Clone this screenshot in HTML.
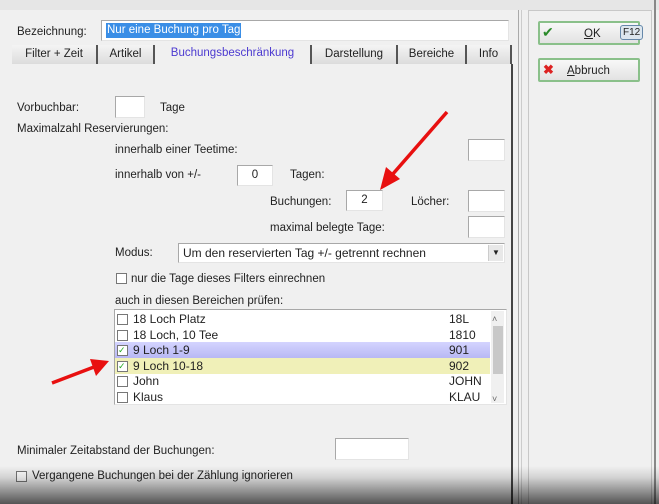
<!DOCTYPE html>
<html><head><meta charset="utf-8"><style>
body{margin:0;width:659px;height:504px;overflow:hidden;background:#f0f0f0;font-family:"Liberation Sans",sans-serif;font-size:11.5px;line-height:16px;color:#222;position:relative}
.a{position:absolute;white-space:nowrap}
.box{position:absolute;background:#fff;border:1px solid #a8a8a8;border-right-color:#e4e4e4;border-bottom-color:#e4e4e4;box-sizing:border-box}
.tab{position:absolute;top:45px;height:19px;background:linear-gradient(#f4f4f4,#dcdcdc);border-right:2px solid #555;box-sizing:border-box;text-align:center;line-height:19px}
.cb{position:absolute;width:9px;height:9px;border:1px solid #777;background:#fff}
.row{position:absolute;left:115px;width:375px;height:16px;line-height:16px;font-size:12px}
.btn{position:absolute;left:538px;width:102px;height:24px;border:2px solid #8ac08a;border-radius:2px;background:linear-gradient(#f8f8f8,#e2e2e2);box-sizing:border-box}
</style></head><body>
<div class="a" style="left:0;top:0;width:659px;height:10px;background:#e6e6e6"></div>
<div class="a" style="left:518px;top:10px;width:1px;height:494px;background:#aaa"></div>
<div class="a" style="left:521px;top:10px;width:1px;height:494px;background:#ccc"></div>
<div class="a" style="left:528px;top:10px;width:124px;height:494px;border:1px solid #c8c8c8;border-bottom:none;box-sizing:border-box"></div>
<div class="a" style="left:654px;top:0;width:2px;height:504px;background:#888"></div>

<div class="a" style="left:17px;top:24px">Bezeichnung:</div>
<div class="box" style="left:101px;top:20px;width:408px;height:21px"></div>
<div class="a" style="left:106px;top:23px;background:#3a8ee6;color:#fff;padding:0 1px;line-height:15px">Nur eine Buchung pro Tag</div>

<div class="tab" style="left:12px;width:86px">Filter + Zeit</div>
<div class="tab" style="left:98px;width:57px">Artikel</div>
<div class="a" style="left:155px;top:44px;width:155px;height:21px;background:#f0f0f0;text-align:center;color:#4c3ad0;line-height:19px">Buchungsbeschränkung</div>
<div class="tab" style="left:310px;width:88px;border-left:2px solid #555">Darstellung</div>
<div class="tab" style="left:398px;width:69px">Bereiche</div>
<div class="tab" style="left:467px;width:45px">Info</div>
<div class="a" style="left:511px;top:64px;width:2px;height:440px;background:#444"></div>

<div class="btn" style="top:21px"><span class="a" style="left:2px;top:1px;color:#2a8a2a;font-size:14px">✔</span><span class="a" style="left:44px;top:3px"><u>O</u>K</span><span class="a" style="left:80px;top:2px;font-size:10px;line-height:13px;border:1px solid #6688aa;border-radius:3px;padding:0 2px;background:#dde6ee">F12</span></div>
<div class="btn" style="top:58px"><span class="a" style="left:3px;top:2px;color:#d22;font-weight:bold;font-size:13px">✖</span><span class="a" style="left:27px;top:3px"><u>A</u>bbruch</span></div>

<div class="a" style="left:17px;top:100px">Vorbuchbar:</div>
<div class="box" style="left:115px;top:96px;width:30px;height:22px"></div>
<div class="a" style="left:160px;top:100px">Tage</div>
<div class="a" style="left:17px;top:121px">Maximalzahl Reservierungen:</div>
<div class="a" style="left:115px;top:142px">innerhalb einer Teetime:</div>
<div class="box" style="left:468px;top:139px;width:37px;height:22px"></div>
<div class="a" style="left:115px;top:167px">innerhalb von +/-</div>
<div class="box" style="left:237px;top:165px;width:36px;height:21px;text-align:center;line-height:19px">0</div>
<div class="a" style="left:290px;top:167px">Tagen:</div>
<div class="a" style="left:270px;top:194px">Buchungen:</div>
<div class="box" style="left:346px;top:190px;width:37px;height:21px;text-align:center;line-height:19px">2</div>
<div class="a" style="left:411px;top:194px">Löcher:</div>
<div class="box" style="left:468px;top:190px;width:37px;height:22px"></div>
<div class="a" style="left:270px;top:220px">maximal belegte Tage:</div>
<div class="box" style="left:468px;top:216px;width:37px;height:22px"></div>
<div class="a" style="left:115px;top:245px">Modus:</div>
<div class="box" style="left:178px;top:243px;width:327px;height:20px;padding-left:4px;line-height:18px;font-size:12px">Um den reservierten Tag +/- getrennt rechnen<span class="a" style="right:1px;top:1px;width:14px;height:16px;background:#e8e8e8;border-left:1px solid #ccc;font-size:8px;text-align:center;line-height:16px">▼</span></div>
<div class="cb" style="left:116px;top:273px"></div>
<div class="a" style="left:131px;top:271px">nur die Tage dieses Filters einrechnen</div>
<div class="a" style="left:115px;top:293px">auch in diesen Bereichen prüfen:</div>

<div class="box" style="left:114px;top:309px;width:393px;height:96px"></div>
<div class="a" style="left:491px;top:311px;width:13px;height:92px;background:#f0f0f0"></div>
<div class="a" style="left:493px;top:326px;width:10px;height:48px;background:#c8c8c8"></div>
<div class="a" style="left:492px;top:311px;font-size:9px;color:#666">˄</div>
<div class="a" style="left:492px;top:391px;font-size:9px;color:#666">˅</div>
<div class="row" style="top:311px"><span class="cb" style="left:2px;top:3px"></span><span class="a" style="left:18px">18 Loch Platz</span><span class="a" style="left:334px">18L</span></div>
<div class="row" style="top:327px"><span class="cb" style="left:2px;top:3px"></span><span class="a" style="left:18px">18 Loch, 10 Tee</span><span class="a" style="left:334px">1810</span></div>
<div class="row" style="top:342px;background:linear-gradient(#d4d4ff,#b8b8f4)"><span class="cb" style="left:2px;top:3px;color:#2a2;font-size:9px;line-height:9px">✓</span><span class="a" style="left:18px">9 Loch 1-9</span><span class="a" style="left:334px">901</span></div>
<div class="row" style="top:358px;background:#f0f0b8"><span class="cb" style="left:2px;top:3px;color:#2a2;font-size:9px;line-height:9px">✓</span><span class="a" style="left:18px">9 Loch 10-18</span><span class="a" style="left:334px">902</span></div>
<div class="row" style="top:373px"><span class="cb" style="left:2px;top:3px"></span><span class="a" style="left:18px">John</span><span class="a" style="left:334px">JOHN</span></div>
<div class="row" style="top:389px"><span class="cb" style="left:2px;top:3px"></span><span class="a" style="left:18px">Klaus</span><span class="a" style="left:334px">KLAU</span></div>

<div class="a" style="left:17px;top:443px">Minimaler Zeitabstand der Buchungen:</div>
<div class="box" style="left:335px;top:438px;width:74px;height:22px"></div>
<div class="cb" style="left:16px;top:471px"></div>
<div class="a" style="left:32px;top:468px">Vergangene Buchungen bei der Zählung ignorieren</div>

<div class="a" style="left:0;top:466px;width:659px;height:38px;background:linear-gradient(rgba(0,0,0,0),rgba(0,0,0,0.12) 30%,rgba(0,0,0,0.65))"></div>

<svg class="a" style="left:0;top:0" width="659" height="504">
<line x1="447" y1="112" x2="392" y2="175" stroke="#e81010" stroke-width="3.5"/>
<polygon points="380,190 386,167 400,179" fill="#e81010"/>
<line x1="52" y1="383" x2="94" y2="367" stroke="#e81010" stroke-width="3.5"/>
<polygon points="109,361 90,359 96,376" fill="#e81010"/>
</svg>
</body></html>
